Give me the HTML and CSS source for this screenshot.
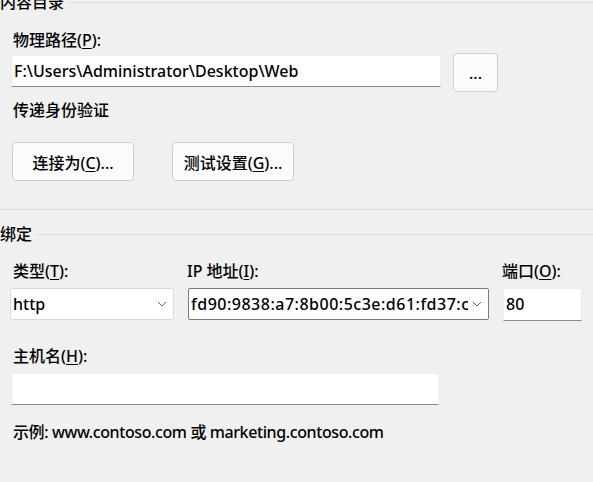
FILE: index.html
```html
<!DOCTYPE html>
<html lang="zh-CN">
<head>
<meta charset="utf-8">
<link rel="stylesheet" href="styles.css">
</head>
<body>
<div class="page">
  <div class="legend">
    <span class="legend-text">内容目录</span>
    <span class="rule"></span>
  </div>
  <div class="label l1">物理路径(<u>P</u>):</div>
  <div class="path-row">
    <div class="textbox path-box">F:\Users\Administrator\Desktop\Web</div>
    <button class="btn dots">...</button>
  </div>
  <div class="label l2">传递身份验证</div>
  <div class="btn-row">
    <button class="btn wide">连接为(<u>C</u>)...</button>
    <button class="btn wide">测试设置(<u>G</u>)...</button>
  </div>
  <div class="separator"></div>
  <div class="legend legend2">
    <span class="legend-text">绑定</span>
    <span class="rule"></span>
  </div>
  <div class="binding">
    <div class="col col-type">
      <div class="label">类型(<u>T</u>):</div>
      <div class="select">
        <span class="sel-text">http</span>
        <svg class="chev" width="10" height="6" viewBox="0 0 10 6"><path d="M1 1 L5 5 L9 1" fill="none" stroke="#606060" stroke-width="1"/></svg>
      </div>
    </div>
    <div class="col col-ip">
      <div class="label">IP 地址(<u>I</u>):</div>
      <div class="select focus">
        <span class="sel-text ip-text">fd90:9838:a7:8b00:5c3e:d61:fd37:c4a2</span>
        <svg class="chev" width="10" height="6" viewBox="0 0 10 6"><path d="M1 1 L5 5 L9 1" fill="none" stroke="#606060" stroke-width="1"/></svg>
      </div>
    </div>
    <div class="col col-port">
      <div class="label">端口(<u>O</u>):</div>
      <div class="textbox port-box">80</div>
    </div>
  </div>
  <div class="label l-host">主机名(<u>H</u>):</div>
  <div class="textbox host-box"></div>
  <div class="label l-ex">示例: www.contoso.com 或 marketing.contoso.com</div>
</div>
</body>
</html>
```
FILE: styles.css
```css
html, body {
  margin: 0;
  padding: 0;
}
body {
  background: #f0f0f0;
  font-family: "Noto Sans", "Noto Sans CJK SC", sans-serif;
  font-size: 16px;
  font-weight: 500;
  color: #000;
  width: 593px;
  height: 482px;
  overflow: hidden;
}
.page {
  display: flex;
  flex-direction: column;
}
u {
  text-decoration-thickness: 1px;
  text-underline-offset: 2px;
}
.legend {
  display: flex;
  align-items: center;
  height: 16px;
  margin-top: -6px;
  line-height: 16px;
}
.legend-text {
  white-space: nowrap;
}
.rule {
  flex: 1;
  height: 0;
  border-top: 1px solid #dadada;
  margin-left: 5px;
}
.label {
  line-height: 20px;
  height: 20px;
  white-space: nowrap;
}
.l1 {
  margin-top: 20px;
  padding-left: 13px;
}
.path-row {
  display: flex;
  align-items: flex-start;
  margin-top: 3px;
  padding-left: 11px;
  gap: 12px;
}
.textbox {
  box-sizing: border-box;
  background: #fff;
  border: 1px solid #ececec;
  border-bottom: 1px solid #8a8a8a;
  height: 32px;
  line-height: 30px;
  padding-left: 2px;
  white-space: nowrap;
  overflow: hidden;
}
.path-box {
  width: 430px;
  margin-top: 2px;
}
.btn {
  box-sizing: border-box;
  font: inherit;
  color: #000;
  background: #fcfcfc;
  border: 1px solid #cfcfcf;
  border-radius: 4px;
  padding: 0;
  height: 39px;
  cursor: default;
}
.dots {
  width: 45px;
}
.l2 {
  margin-top: 8px;
  padding-left: 13px;
}
.btn-row {
  display: flex;
  gap: 38px;
  margin-top: 22px;
  padding-left: 12px;
}
.wide {
  width: 122px;
}
.separator {
  margin-top: 28px;
  height: 0;
  border-top: 1px solid #dadada;
}
.legend2 {
  margin-top: 16px;
}
.binding {
  display: flex;
  margin-top: 19px;
}
.col {
  display: flex;
  flex-direction: column;
}
.col .label {
  margin-bottom: 7px;
}
.col-type {
  margin-left: 10px;
  width: 164px;
}
.col-type .label {
  padding-left: 3px;
}
.col-ip {
  margin-left: 14px;
  width: 301px;
}
.col-ip .label {
  margin-left: -1px;
}
.col-port {
  margin-left: 14px;
  width: 79px;
}
.col-port .label {
  margin-left: -1px;
}
.select {
  box-sizing: border-box;
  height: 32px;
  background: #fff;
  border: 1px solid #d9d9d9;
  border-radius: 2px;
  display: flex;
  align-items: center;
  padding-left: 2px;
  padding-right: 6px;
}
.select.focus {
  border-color: #7a7a7a;
}
.sel-text {
  flex: 1;
  overflow: hidden;
  white-space: nowrap;
}
.ip-text {
  letter-spacing: 0.5px;
}
.chev {
  flex: none;
  margin-left: 4px;
}
.port-box {
  height: 33px;
  line-height: 31px;
}
.l-host {
  margin-top: 25px;
  padding-left: 13px;
}
.host-box {
  margin-top: 7px;
  margin-left: 11px;
  width: 428px;
}
.l-ex {
  margin-top: 17px;
  padding-left: 13px;
  letter-spacing: -0.4px;
}
```
